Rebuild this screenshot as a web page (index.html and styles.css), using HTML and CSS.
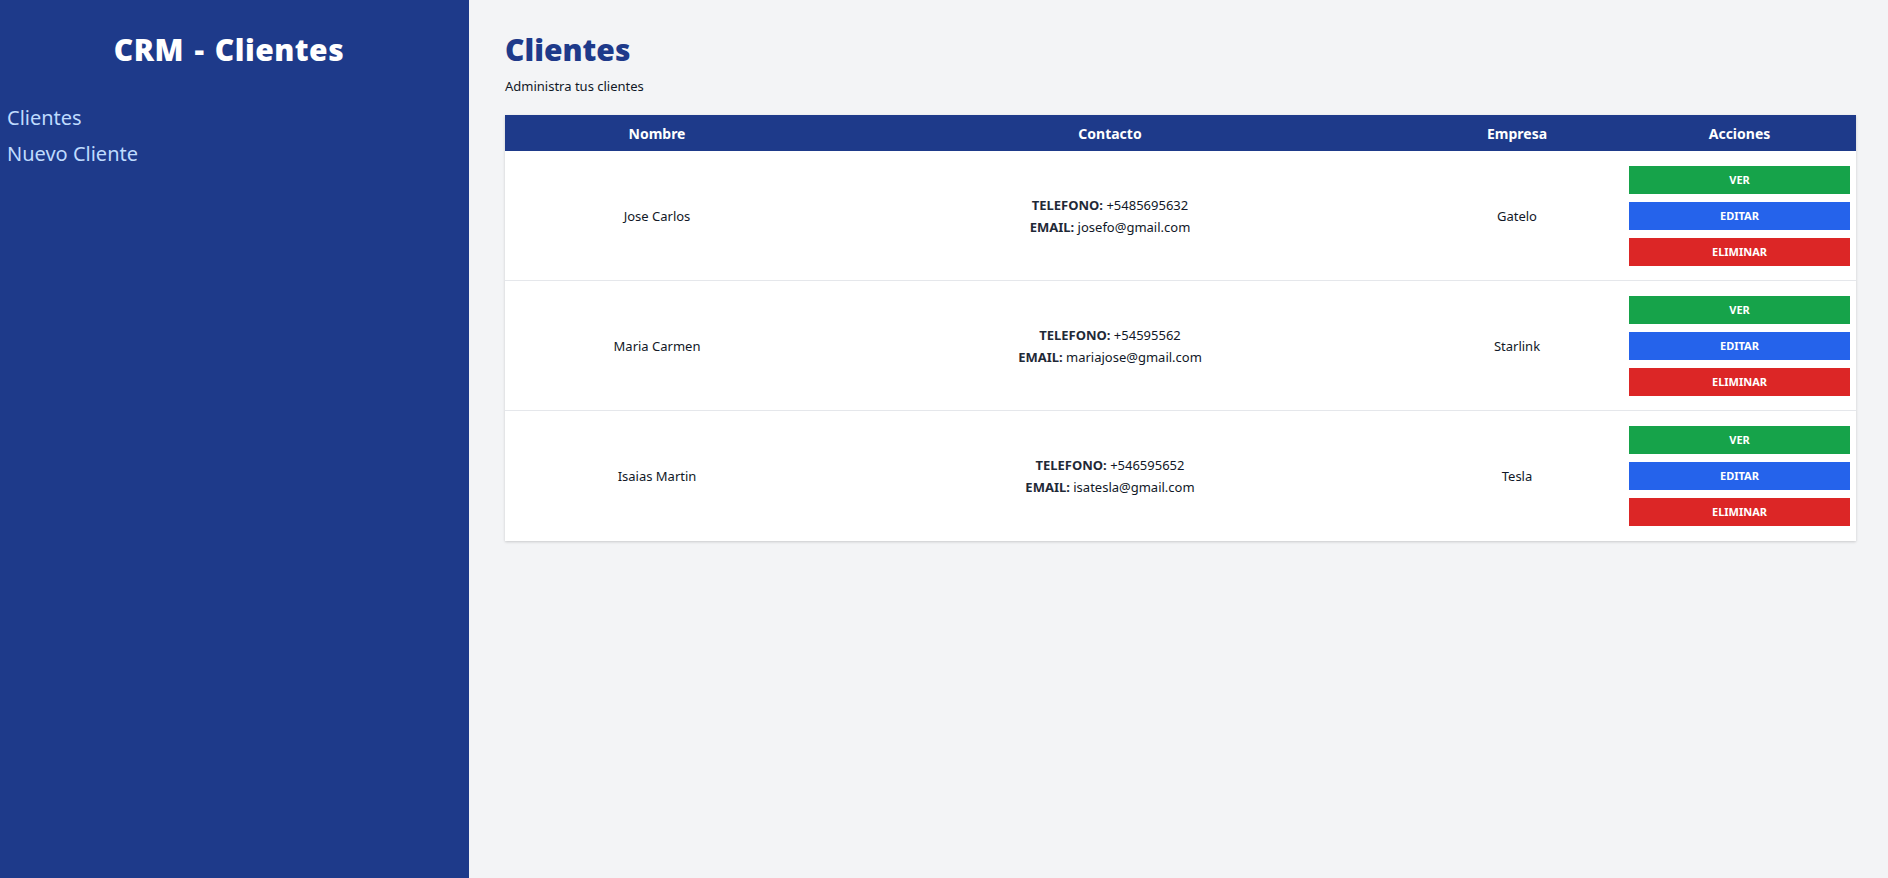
FILE: index.html
```html
<!DOCTYPE html>
<html lang="es">
<head>
<meta charset="utf-8">
<title>CRM - Clientes</title>
<link rel="stylesheet" href="styles.css">
</head>
<body>
<div class="layout">
  <aside class="sidebar">
    <h2 class="brand">CRM - Clientes</h2>
    <nav class="nav">
      <a href="#" class="nav-link">Clientes</a>
      <a href="#" class="nav-link">Nuevo Cliente</a>
    </nav>
  </aside>
  <main class="main">
    <h1 class="page-title">Clientes</h1>
    <p class="page-sub">Administra tus clientes</p>
    <table class="clients">
      <colgroup>
        <col class="c-nombre"><col class="c-contacto"><col class="c-empresa"><col class="c-acciones">
      </colgroup>
      <thead>
        <tr><th>Nombre</th><th>Contacto</th><th>Empresa</th><th>Acciones</th></tr>
      </thead>
      <tbody>
        <tr>
          <td>Jose Carlos</td>
          <td><p class="line"><b>TELEFONO:</b> +5485695632</p><p class="line"><b>EMAIL:</b> josefo@gmail.com</p></td>
          <td>Gatelo</td>
          <td class="actions"><a class="btn btn-ver" href="#">VER</a><a class="btn btn-edit" href="#">EDITAR</a><a class="btn btn-del" href="#">ELIMINAR</a></td>
        </tr>
        <tr>
          <td>Maria Carmen</td>
          <td><p class="line"><b>TELEFONO:</b> +54595562</p><p class="line"><b>EMAIL:</b> mariajose@gmail.com</p></td>
          <td>Starlink</td>
          <td class="actions"><a class="btn btn-ver" href="#">VER</a><a class="btn btn-edit" href="#">EDITAR</a><a class="btn btn-del" href="#">ELIMINAR</a></td>
        </tr>
        <tr>
          <td>Isaias Martin</td>
          <td><p class="line"><b>TELEFONO:</b> +546595652</p><p class="line"><b>EMAIL:</b> isatesla@gmail.com</p></td>
          <td>Tesla</td>
          <td class="actions"><a class="btn btn-ver" href="#">VER</a><a class="btn btn-edit" href="#">EDITAR</a><a class="btn btn-del" href="#">ELIMINAR</a></td>
        </tr>
      </tbody>
    </table>
  </main>
</div>
</body>
</html>
```

FILE: styles.css
```css
* { box-sizing: border-box; }
html, body { margin: 0; padding: 0; height: 100%; }
body {
  font-family: "Noto Sans", "Open Sans", sans-serif;
  color: #1f2937;
  background: #f3f4f6;
}
.layout { display: flex; min-height: 100vh; }
.sidebar {
  width: 469px;
  flex: 0 0 469px;
  background: #1e3a8a;
  padding: 32px 0 0 7px;
}
.brand {
  margin: 0 18px 0 0;
  text-align: center;
  color: #fff;
  font-size: 30px;
  line-height: 36px;
  font-weight: 900;
  letter-spacing: 0.5px;
  word-spacing: 2px;
}
.nav { display: flex; flex-direction: column; gap: 8px; margin-top: 36px; }
.nav-link {
  color: #bfdbfe;
  text-decoration: none;
  font-size: 20px;
  line-height: 28px;
}
.main {
  flex: 1;
  padding: 32px 32px 32px 36px;
}
.page-title {
  margin: 0;
  color: #1e3a8a;
  font-size: 30px;
  line-height: 36px;
  font-weight: 900;
}
.page-sub {
  margin: 8px 0 0;
  font-size: 13px;
  line-height: 20px;
  color: #111827;
}
.clients {
  width: 100%;
  margin-top: 19px;
  border-collapse: collapse;
  table-layout: fixed;
  background: #fff;
  box-shadow: 0 1px 3px rgba(0,0,0,0.12), 0 1px 2px rgba(0,0,0,0.06);
}
.c-nombre { width: 304px; }
.c-contacto { width: 602px; }
.c-empresa { width: 212px; }
.c-acciones { width: 233px; }
.clients thead tr { background: #1e3a8a; }
.clients th {
  color: #fff;
  font-size: 14px;
  font-weight: 700;
  height: 36px;
  padding: 0;
  text-align: center;
}
.clients td {
  text-align: center;
  vertical-align: middle;
  font-size: 13px;
  line-height: 20px;
  padding: 15px 6px 14px;
  border-bottom: 1px solid #e5e7eb;
  color: #111827;
}
.clients tbody tr:last-child td { border-bottom: 0; padding-bottom: 15px; }
.line { margin: 0; line-height: 22px; }
.line b { font-weight: 700; color: #1f2937; }
.actions { padding-left: 6px; padding-right: 6px; }
.btn {
  display: block;
  height: 28px;
  line-height: 28px;
  color: #fff;
  text-decoration: none;
  font-size: 11px;
  font-weight: 700;
  text-align: center;
}
.btn + .btn { margin-top: 8px; }
.btn-ver { background: #16a34a; }
.btn-edit { background: #2563eb; }
.btn-del { background: #dc2626; }
```
